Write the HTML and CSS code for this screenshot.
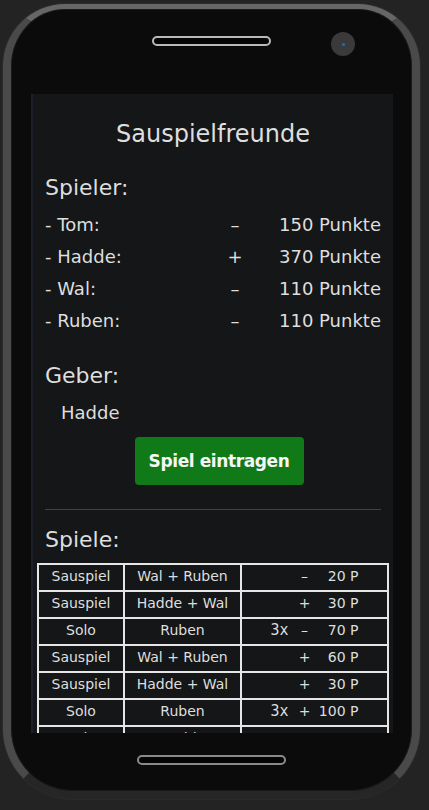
FILE: index.html
```html
<!DOCTYPE html>
<html lang="de">
<head>
<meta charset="utf-8">
<title>Sauspielfreunde</title>
<link rel="stylesheet" href="styles.css">
</head>
<body>
<div class="phone">
  <div class="phone-top">
    <div class="speaker"></div>
    <div class="camera"><span class="lens"></span></div>
  </div>
  <div class="screen">
    <h1 class="title">Sauspielfreunde</h1>
    <h2 class="section">Spieler:</h2>
    <div class="players">
      <div class="player"><span class="name">- Tom:</span><span class="sign">&ndash;</span><span class="points">150 Punkte</span></div>
      <div class="player"><span class="name">- Hadde:</span><span class="sign">+</span><span class="points">370 Punkte</span></div>
      <div class="player"><span class="name">- Wal:</span><span class="sign">&ndash;</span><span class="points">110 Punkte</span></div>
      <div class="player"><span class="name">- Ruben:</span><span class="sign">&ndash;</span><span class="points">110 Punkte</span></div>
    </div>
    <h2 class="section geber-title">Geber:</h2>
    <div class="geber">Hadde</div>
    <div class="actions"><button class="btn">Spiel eintragen</button></div>
    <hr class="divider">
    <h2 class="section">Spiele:</h2>
    <table class="games">
      <tr><td>Sauspiel</td><td>Wal + Ruben</td><td><span class="score"><span class="mult"></span><span class="op">&ndash;</span><span class="num">20</span> P</span></td></tr>
      <tr><td>Sauspiel</td><td>Hadde + Wal</td><td><span class="score"><span class="mult"></span><span class="op">+</span><span class="num">30</span> P</span></td></tr>
      <tr><td>Solo</td><td>Ruben</td><td><span class="score"><span class="mult">3x</span><span class="op">&ndash;</span><span class="num">70</span> P</span></td></tr>
      <tr><td>Sauspiel</td><td>Wal + Ruben</td><td><span class="score"><span class="mult"></span><span class="op">+</span><span class="num">60</span> P</span></td></tr>
      <tr><td>Sauspiel</td><td>Hadde + Wal</td><td><span class="score"><span class="mult"></span><span class="op">+</span><span class="num">30</span> P</span></td></tr>
      <tr><td>Solo</td><td>Ruben</td><td><span class="score"><span class="mult">3x</span><span class="op">+</span><span class="num">100</span> P</span></td></tr>
      <tr><td>Solo</td><td>Hadde</td><td><span class="score"><span class="mult"></span><span class="op">+</span><span class="num">90</span> P</span></td></tr>
    </table>
  </div>
  <div class="home"></div>
</div>
</body>
</html>
```
FILE: styles.css
```css
html, body {
  margin: 0;
  padding: 0;
}
body {
  width: 429px;
  height: 810px;
  overflow: hidden;
  background: #232323;
  font-family: "DejaVu Sans", "Open Sans", sans-serif;
  color: #dedede;
}
.phone {
  box-sizing: border-box;
  margin: 4px 0 0 3px;
  width: 417px;
  height: 795px;
  border: 8px solid #4a4a4a;
  border-top-width: 5px;
  border-top-color: #666;
  border-bottom-color: #262626;
  border-radius: 62px 62px 70px 70px;
  background: #0b0b0b;
  box-shadow: inset 0 0 0 1px #1a1a1a, 0 0 0 1px #2b2b2b;
  display: flex;
  flex-direction: column;
}
.phone-top {
  position: relative;
  height: 85px;
  display: flex;
  justify-content: center;
}
.speaker {
  box-sizing: border-box;
  margin-top: 27px;
  width: 119px;
  height: 10px;
  border: 2px solid #b9b9b9;
  border-radius: 6px;
  background: #050505;
}
.camera {
  position: absolute;
  left: 320px;
  top: 23px;
  width: 24px;
  height: 24px;
  border-radius: 50%;
  background: #3a3a3a;
  display: flex;
  align-items: center;
  justify-content: center;
}
.lens {
  width: 3px;
  height: 3px;
  border-radius: 50%;
  background: #1f6fb3;
}
.screen {
  box-sizing: border-box;
  margin-left: 20px;
  width: 362px;
  height: 639px;
  overflow: hidden;
  background: #151618;
  border-left: 2px solid #1c2028;
  padding: 0 12px;
}
.title {
  margin: 24px 0 0;
  text-align: center;
  font-size: 24px;
  font-weight: 400;
  line-height: 32px;
}
.section {
  margin: 0;
  font-size: 22px;
  font-weight: 400;
  line-height: 28px;
}
.title + .section {
  margin-top: 24px;
}
.players {
  margin-top: 7px;
}
.player {
  display: grid;
  grid-template-columns: 1fr 20px 136px;
  font-size: 18px;
  line-height: 32px;
}
.sign {
  text-align: center;
}
.points {
  text-align: right;
}
.geber-title {
  margin-top: 25px;
}
.geber {
  margin-top: 11px;
  padding-left: 16px;
  font-size: 18px;
  line-height: 24px;
}
.actions {
  margin-top: 12px;
  padding-left: 12px;
  display: flex;
  justify-content: center;
}
.btn {
  width: 169px;
  height: 48px;
  border: 0;
  border-radius: 4px;
  background: #117a18;
  color: #f6f6f6;
  font-family: inherit;
  font-size: 17px;
  letter-spacing: -0.4px;
  font-weight: 700;
}
.divider {
  margin: 24px 0 16px;
  border: 0;
  height: 1px;
  background: #404244;
}
.games {
  margin: 9px -8px 0;
  width: calc(100% + 16px);
  border-collapse: collapse;
  font-size: 14px;
}
.games td {
  border: 2px solid #e6e6e6;
  height: 23px;
  padding: 0 0 2px;
  text-align: center;
  line-height: 23px;
}
.games td:nth-child(1) { width: 84px; }
.games td:nth-child(2) { width: 115px; }
.score {
  display: inline-flex;
  align-items: baseline;
  white-space: pre;
}
.mult {
  width: 26px;
  text-align: left;
  font-family: "DejaVu Sans Mono", monospace;
  font-weight: 400;
  font-size: 15px;
}
.op {
  width: 16px;
  text-align: center;
}
.num {
  width: 33px;
  text-align: right;
}
.home {
  box-sizing: border-box;
  margin: 22px auto 0;
  width: 149px;
  height: 10px;
  border: 2px solid #8a8a8a;
  border-radius: 6px;
  background: #050505;
}
```
